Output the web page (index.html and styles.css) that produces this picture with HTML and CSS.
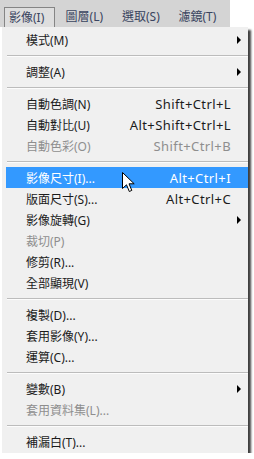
FILE: index.html
```html
<!DOCTYPE html>
<html>
  <head>
    <meta charset="UTF-8">
    <title>影像選單</title>
    <link rel="stylesheet" href="styles.css">
  </head>
  <body>
    <div class="menubar">
      <span class="tab active">影像(I)</span>
      <span class="tab">圖層(L)</span>
      <span class="tab">選取(S)</span>
      <span class="tab">濾鏡(T)</span>
    </div>

    <div class="menu">
      <div class="item"><span class="label">模式(M)</span><span class="arrow"></span></div>
      <div class="sep"></div>
      <div class="item"><span class="label">調整(A)</span><span class="arrow"></span></div>
      <div class="sep"></div>
      <div class="item"><span class="label">自動色調(N)</span><span class="key">Shift+Ctrl+L</span></div>
      <div class="item"><span class="label">自動對比(U)</span><span class="key">Alt+Shift+Ctrl+L</span></div>
      <div class="item off"><span class="label">自動色彩(O)</span><span class="key">Shift+Ctrl+B</span></div>
      <div class="sep"></div>
      <div class="item hot"><span class="label">影像尺寸(I)...</span><span class="key">Alt+Ctrl+I</span></div>
      <div class="item"><span class="label">版面尺寸(S)...</span><span class="key">Alt+Ctrl+C</span></div>
      <div class="item"><span class="label">影像旋轉(G)</span><span class="arrow"></span></div>
      <div class="item off"><span class="label">裁切(P)</span></div>
      <div class="item"><span class="label">修剪(R)...</span></div>
      <div class="item"><span class="label">全部顯現(V)</span></div>
      <div class="sep"></div>
      <div class="item"><span class="label">複製(D)...</span></div>
      <div class="item"><span class="label">套用影像(Y)...</span></div>
      <div class="item"><span class="label">運算(C)...</span></div>
      <div class="sep"></div>
      <div class="item"><span class="label">變數(B)</span><span class="arrow"></span></div>
      <div class="item off"><span class="label">套用資料集(L)...</span></div>
      <div class="sep"></div>
      <div class="item"><span class="label">補漏白(T)...</span></div>
    </div>

    <!-- mouse pointer over the highlighted row -->
    <svg class="cursor" width="14" height="22" viewBox="0 0 14 22">
      <polygon points="0.5,0.5 0.5,16.5 4.5,12.8 7.3,19.5 9.8,18.4 7,11.8 12.2,11.8" fill="#fff" stroke="#000" stroke-width="1" stroke-linejoin="round"/>
    </svg>
  </body>
</html>
```

FILE: styles.css
```css
body { margin: 0; background: #fff; font: 12px "Noto Sans", "Noto Sans CJK TC", sans-serif; color: #1b1b1b; }

.menubar { display: flex; align-items: flex-end; width: 226px; height: 27px; padding-left: 4px; background: #d4d4d4; }
.tab { width: 52px; margin-right: 6px; height: 20px; line-height: 19px; padding-left: 5px; box-sizing: border-box; color: #3a4560; }
.tab.active { border: 1px solid #858585; border-bottom: none; padding-left: 4px; background: #dedede; }

.menu { position: relative; width: 246px; margin-left: 2px; padding: 2px 0 1px; background: #f0f0f0; box-shadow: 3px 3px 2px rgba(0,0,0,0.75); }
.item { display: flex; align-items: center; height: 21px; margin-left: 4px; padding: 0 17px 0 20px; }
.label { flex: 1; }
.key { font-size: 13px; letter-spacing: 0.4px; }
.arrow { width: 0; height: 0; margin-right: -10px; border-left: 4px solid #000; border-top: 4px solid transparent; border-bottom: 4px solid transparent; }
.off { color: #8e8e8e; }
.hot { background: #3399ff; color: #fff; }
.sep { height: 0; margin: 5px 0 4px 5px; border-top: 1px solid #bcbcbc; border-bottom: 1px solid #fcfcfc; }

.cursor { position: absolute; left: 122px; top: 172px; }
```
